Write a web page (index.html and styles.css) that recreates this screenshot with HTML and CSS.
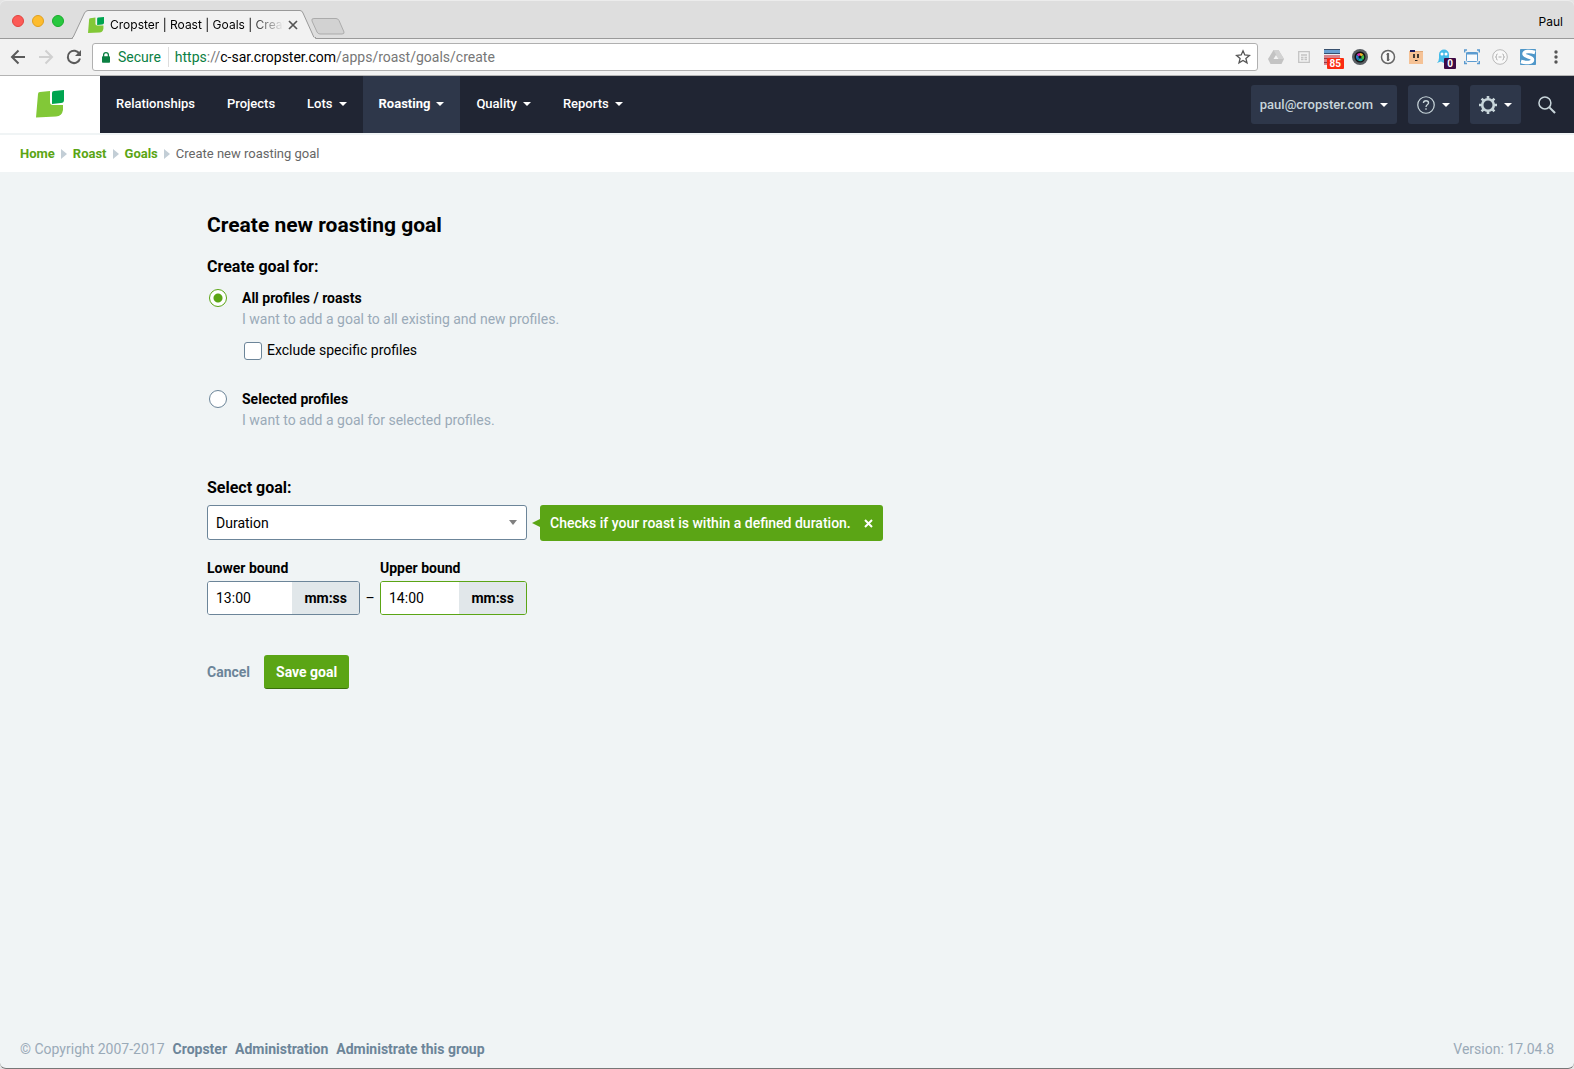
FILE: index.html
```html
<!DOCTYPE html>
<html lang="en">
<head>
    <title>Cropster | Roast | Goals | Create</title>
    <meta charset="UTF-8">
    <meta name="viewport" content="width=device-width, initial-scale=1.0">
    <link rel="stylesheet" href="styles.css">
</head>
<body>
    <div class="window">
        <!-- Browser tabs -->
        <div class="tab-strip">
            <div class="lights">
                <span class="light red"></span>
                <span class="light yellow"></span>
                <span class="light green"></span>
            </div>
            <div class="tab">
                <svg class="tab-shape" width="244" height="30" viewBox="0 0 244 30">
                    <path d="M0 28.500H1L12.500 4Q14 1.500 16 1.500H228Q230 1.500 231 4L242 28.500H244V30H0Z" fill="#f2f2f2" stroke="#9a9a9a"/>
                    <path d="M1 29.500H243" stroke="#f2f2f2" stroke-width="2"/>
                </svg>
                <div class="tab-content">
                    <svg width="16" height="16" viewBox="0 0 28 28">
                        <path d="M2 4Q2 2 4 2L13 1V12Q13 15 16 15H27V20Q26 27 20 27L0 28Z" fill="#82c837"/>
                        <path d="M16 3Q16 1 18 1L28 0V10Q28 13 25 13L16 14Z" fill="#00a550"/>
                    </svg>
                    <span class="tab-title">Cropster | Roast | Goals | Create</span>
                    <button class="tab-close" aria-label="Close tab">
                        <svg width="10" height="10" viewBox="0 0 10 10"><path d="M1 1L9 9M9 1L1 9" stroke="#555" stroke-width="1.700"/></svg>
                    </button>
                </div>
            </div>
            <svg class="new-tab" width="34" height="17" viewBox="0 0 34 17">
                <path d="M3 .5H25Q27 .5 28 2.500L33 14Q33.500 16 31 16H9Q7 16 6 14L1 3Q0 .5 3 .5Z" fill="#d2d2d2" stroke="#ababab"/>
            </svg>
            <span class="profile-name">Paul</span>
        </div>

        <!-- Browser toolbar -->
        <div class="toolbar">
            <div class="tools">
                <button aria-label="Back">
                    <svg width="16" height="16" viewBox="0 0 16 16"><path d="M15 8H2M8.500 1.500L2 8L8.500 14.500" fill="none" stroke="#5a5a5a" stroke-width="2"/></svg>
                </button>
                <button aria-label="Forward">
                    <svg width="16" height="16" viewBox="0 0 16 16"><path d="M1 8H14M7.500 1.500L14 8L7.500 14.500" fill="none" stroke="#d0d0d0" stroke-width="2"/></svg>
                </button>
                <button aria-label="Reload">
                    <svg width="16" height="16" viewBox="0 0 16 16"><path d="M13.500 5A6.200 6.200 0 1 0 14 9.500" fill="none" stroke="#5a5a5a" stroke-width="2"/><path d="M15 1V7H9Z" fill="#5a5a5a"/></svg>
                </button>
            </div>
            <div class="address-bar">
                <svg width="8" height="11" viewBox="0 0 10 13"><rect y="5" width="10" height="8" rx="1" fill="#0b8043"/><path d="M2 6V3.500a3 3 0 0 1 6 0V6" fill="none" stroke="#0b8043" stroke-width="1.600"/></svg>
                <span class="secure">Secure</span>
                <span class="url"><span class="scheme">https</span>://<span class="host">c-sar.cropster.com</span>/apps/roast/goals/create</span>
                <svg class="star" width="16" height="16" viewBox="0 0 16 16"><path d="M8 1.800L9.800 6L14.400 6.400L10.900 9.400L12 13.900L8 11.500L4 13.900L5.100 9.400L1.600 6.400L6.200 6Z" fill="none" stroke="#555" stroke-width="1.300"/></svg>
            </div>
            <div class="extensions">
                <span class="extension">
                    <svg width="16" height="14" viewBox="0 0 16 14"><path d="M5.500 0H10.500L16 9L13.500 14H2.500L0 9Z" fill="#c3c3c3"/><path d="M10.500 0L16 9H10.500L5.500 0Z" fill="#d2d2d2"/><path d="M8 5L10.500 9H5.500Z" fill="#f2f2f2"/></svg>
                </span>
                <span class="extension">
                    <svg width="12" height="12" viewBox="0 0 12 12"><path d="M.7.700H11.300V11.300H.7ZM3 4H9M3 6.500H5.500M6.500 6.500H9M3 8.500H5.500M6.500 8.500H9" fill="none" stroke="#c4c4c4" stroke-width="1.300"/></svg>
                </span>
                <span class="extension">
                    <svg width="16" height="16" viewBox="0 0 16 16"><path d="M0 0H16V16H0Z" fill="#d9828b"/><path d="M0 1H16V4H0Z" fill="#6a9fd0"/><path d="M0 .5H16M0 4.500H16" stroke="#38506e"/><path d="M0 5.500H16" stroke="#e8eef3"/><path d="M0 9.500H16M0 13.500H16" stroke="#8c3f4b"/></svg>
                    <span class="badge badge-red">85</span>
                </span>
                <span class="extension">
                    <svg width="16" height="16" viewBox="0 0 16 16"><circle cx="8" cy="8" r="8" fill="#5a5f64"/><circle cx="8" cy="8" r="5.500" fill="#111"/><path d="M8 8L4.500 6A4 4 0 0 1 8 4Z" fill="#d92fb0"/><path d="M8 8V4A4 4 0 0 1 11.500 6Z" fill="#f0b02c"/><path d="M8 8L11.500 6A4 4 0 0 1 11 11Z" fill="#43bc45"/><path d="M8 8L11 11A4 4 0 0 1 6 11.500Z" fill="#16aa9c"/><path d="M8 8L6 11.500A4 4 0 0 1 4.500 6Z" fill="#2479c6"/><circle cx="8" cy="8" r="1.500" fill="#111"/></svg>
                </span>
                <span class="extension">
                    <svg width="16" height="16" viewBox="0 0 16 16"><circle cx="8" cy="8" r="6.500" fill="#f8f8f8" stroke="#666" stroke-width="1.500"/><path d="M8 4V12" stroke="#666" stroke-width="2.200"/><path d="M6.500 5.500H9M7 10.500H9.500" stroke="#666"/></svg>
                </span>
                <span class="extension">
                    <svg width="16" height="16" viewBox="0 0 16 16"><path d="M1 2H15V15H1Z" fill="#f5c296"/><path d="M2 1H7V3H2Z" fill="#1b1b5e"/><path d="M7 2H15V3H7Z" fill="#e0a878"/><path d="M6 5V9M10 5V9" stroke="#222" stroke-width="1.700"/><path d="M7 11.500H9.500" stroke="#222"/></svg>
                </span>
                <span class="extension">
                    <svg width="16" height="16" viewBox="0 0 16 16"><path d="M3 5.500A5 5 0 0 1 13 5.500V14L10.500 12.500L8 14L5 12.500L1 14Q3 12 3 9Z" fill="#46bce8"/><circle cx="6" cy="5" r="1.500" fill="#fff"/><circle cx="10" cy="5" r="1.500" fill="#fff"/></svg>
                    <span class="badge badge-purple">0</span>
                </span>
                <span class="extension">
                    <svg width="16" height="16" viewBox="0 0 16 16"><path d="M.7 3.500V1H3M13 1H15.300V3.500M15.300 12V14.500H13M3 14.500H.7V12" fill="none" stroke="#5b9bd0" stroke-width="1.400"/><rect x="2.500" y="3.500" width="11" height="9" rx="1" fill="#f8fafc" stroke="#5b9bd0"/><path d="M2 4.500H14" stroke="#5b9bd0" stroke-width="2"/></svg>
                </span>
                <span class="extension">
                    <svg width="16" height="16" viewBox="0 0 16 16"><circle cx="8" cy="8" r="7.300" fill="#f8f8f8" stroke="#b8b8b8"/><path d="M5.500 5Q4.500 5 4.500 6.500T3.500 8Q4.500 8 4.500 9.500T5.500 11M10.500 5Q11.500 5 11.500 6.500T12.500 8Q11.500 8 11.500 9.500T10.500 11M6.500 8H9.500" fill="none" stroke="#aaa"/></svg>
                </span>
                <span class="extension">
                    <svg width="16" height="16" viewBox="0 0 16 16"><path d="M.5.500H15.500V15.500H.5Z" fill="#4f97c9" stroke="#4f97c9"/><path d="M15 3.500C10 2 4 2 4 5C4 8 12.500 7.500 12.500 10.800C12.500 14 6 14 1 12.500" fill="none" stroke="#fff" stroke-width="3.500"/></svg>
                </span>
                <span class="extension">
                    <svg width="4" height="14" viewBox="0 0 4 14"><circle cx="2" cy="2" r="1.700" fill="#555"/><circle cx="2" cy="7" r="1.700" fill="#555"/><circle cx="2" cy="12" r="1.700" fill="#555"/></svg>
                </span>
            </div>
        </div>

        <!-- Main navigation -->
        <header class="navbar">
            <a href="#" class="logo" aria-label="Cropster">
                <svg width="28" height="28" viewBox="0 0 28 28">
                    <path d="M2 4Q2 2 4 2L14 1V12Q14 15 17 15H27V20Q26 26 20 26.500L0 27.500Z" fill="#82c837"/>
                    <path d="M16 3Q16 1 18 1L28 0V10Q28 13 25 13L16 14Z" fill="#00a550"/>
                </svg>
            </a>
            <nav class="nav-links">
                <a href="#">Relationships</a>
                <a href="#">Projects</a>
                <a href="#">Lots <span class="caret"></span></a>
                <a href="#" class="active">Roasting <span class="caret"></span></a>
                <a href="#">Quality <span class="caret"></span></a>
                <a href="#">Reports <span class="caret"></span></a>
            </nav>
            <div class="nav-tools">
                <button class="nav-button">paul@cropster.com <span class="caret"></span></button>
                <button class="nav-button" aria-label="Help">
                    <svg width="18" height="18" viewBox="0 0 19 19" fill="none" stroke="#c8d5da"><circle cx="9.500" cy="9.500" r="8.700" stroke-width="1.300"/><path d="M6.800 7.500Q6.800 5 9.500 5T12.200 7.300C12.200 9 9.500 9 9.500 11.500M9.500 13V14.600" stroke-width="1.400"/></svg>
                    <span class="caret"></span>
                </button>
                <button class="nav-button" aria-label="Settings">
                    <svg width="18" height="18" viewBox="0 0 18 18" fill="none" stroke="#c8d5da"><circle cx="9" cy="9" r="5.800" stroke-width="2.600"/><path d="M9 0V3M9 15V18M0 9H3M15 9H18M2.600 2.600L4.800 4.800M13.200 13.200L15.400 15.400M2.600 15.400L4.800 13.200M13.200 4.800L15.400 2.600" stroke-width="2.600"/></svg>
                    <span class="caret"></span>
                </button>
                <button class="search-button" aria-label="Search">
                    <svg width="18" height="18" viewBox="0 0 19 19" fill="none" stroke="#c8d5da"><circle cx="7.300" cy="7.300" r="6.300" stroke-width="1.600"/><path d="M12 12L18 18" stroke-width="2.200"/></svg>
                </button>
            </div>
        </header>

        <div class="breadcrumb">
            <a href="#">Home</a><span class="separator"></span>
            <a href="#">Roast</a><span class="separator"></span>
            <a href="#">Goals</a><span class="separator"></span>
            <span>Create new roasting goal</span>
        </div>

        <!-- Goal form -->
        <main class="content">
            <h1>Create new roasting goal</h1>
            <form onsubmit="return false;" autocomplete="off">
                <h2>Create goal for:</h2>
                <div class="option">
                    <input type="radio" id="all-profiles" name="goal-for" checked>
                    <div>
                        <label for="all-profiles">All profiles / roasts</label>
                        <p>I want to add a goal to all existing and new profiles.</p>
                        <div class="exclude">
                            <input type="checkbox" id="exclude">
                            <label for="exclude">Exclude specific profiles</label>
                        </div>
                    </div>
                </div>
                <div class="option">
                    <input type="radio" id="selected-profiles" name="goal-for">
                    <div>
                        <label for="selected-profiles">Selected profiles</label>
                        <p>I want to add a goal for selected profiles.</p>
                    </div>
                </div>

                <h2 class="select-title"><label for="goal">Select goal:</label></h2>
                <div class="goal-row">
                    <div class="select-wrap">
                        <select id="goal">
                            <option>Duration</option>
                        </select>
                        <span class="select-arrow"></span>
                    </div>
                    <div class="hint">
                        <span>Checks if your roast is within a defined duration.</span>
                        <button type="button" aria-label="Close hint">
                            <svg width="9" height="9" viewBox="0 0 9 9"><path d="M1 1L8 8M8 1L1 8" stroke="#fff" stroke-width="2"/></svg>
                        </button>
                    </div>
                </div>

                <div class="bounds">
                    <div class="bound lower">
                        <label for="lower">Lower bound</label>
                        <div class="input-group">
                            <input type="text" id="lower" value="13:00">
                            <span class="unit">mm:ss</span>
                        </div>
                    </div>
                    <span class="dash">–</span>
                    <div class="bound upper">
                        <label for="upper">Upper bound</label>
                        <div class="input-group focused">
                            <input type="text" id="upper" value="14:00">
                            <span class="unit">mm:ss</span>
                        </div>
                    </div>
                </div>

                <div class="actions">
                    <a href="#">Cancel</a>
                    <button type="submit" class="save-button">Save goal</button>
                </div>
            </form>
        </main>

        <footer class="footer">
            <span>© Copyright 2007-2017</span>
            <a href="#">Cropster</a>
            <a href="#">Administration</a>
            <a href="#">Administrate this group</a>
            <span class="version">Version: 17.04.8</span>
        </footer>
    </div>
</body>
</html>
```
FILE: styles.css
```css
*, *:before, *:after {
    box-sizing: border-box;
}

body {
    margin: 0;
    font-family: Roboto, Arial, sans-serif;
    font-size: 14px;
    line-height: 20px;
    color: #000;
    background-color: #e4e4e4;
}

button {
    font: inherit;
    padding: 0;
    border: none;
    background: none;
    cursor: pointer;
}

a {
    text-decoration: none;
}

svg {
    display: block;
    flex-shrink: 0;
}

.window {
    display: flex;
    flex-direction: column;
    min-height: 100vh;
    border-top: 1px solid #ececec;
    border-bottom: 1px solid #777;
    border-radius: 6px;
    background-color: #f0f4f5;
    overflow: hidden;
}

/* Browser chrome */
.tab-strip {
    display: flex;
    align-items: flex-end;
    height: 38px;
    padding-right: 11px;
    background-color: #dedede;
    box-shadow: inset 0 -1px #9a9a9a;
    font-family: Inter, Roboto, sans-serif;
    font-size: 12px;
}

.lights {
    display: flex;
    gap: 8px;
    width: 72px;
    padding: 0 0 12px 12px;
}

.light {
    width: 12px;
    height: 12px;
    border-radius: 50%;
}

.red {
    background-color: #fc5b57;
    border: 1px solid #e2443f;
}

.yellow {
    background-color: #fdbc2e;
    border: 1px solid #e0a01f;
}

.green {
    background-color: #28c83f;
    border: 1px solid #1aac2c;
}

.tab {
    display: grid;
}

.tab-shape, .tab-content {
    grid-area: 1 / 1;
}

.tab-content {
    display: flex;
    align-items: center;
    padding: 2px 18px 0 16px;
}

.tab-title {
    flex: 1;
    width: 0;
    margin-left: 6px;
    overflow: hidden;
    white-space: nowrap;
    -webkit-mask-image: linear-gradient(to right, #000 80%, transparent);
    mask-image: linear-gradient(to right, #000 80%, transparent);
}

.tab-close {
    margin-left: 4px;
}

.new-tab {
    margin: 0 0 4px -5px;
}

.profile-name {
    margin: 0 0 7px auto;
}

.toolbar {
    display: flex;
    align-items: center;
    height: 37px;
    padding: 0 4px 0 10px;
    border-bottom: 1px solid #b4b4b4;
    background-color: #f2f2f2;
}

.tools {
    display: flex;
    gap: 12px;
    margin-right: 10px;
}

.address-bar {
    display: flex;
    flex: 1;
    align-items: center;
    height: 28px;
    margin-right: 4px;
    padding: 0 6px 0 9px;
    border: 1px solid #b0b0b0;
    border-radius: 3px;
    background-color: #fff;
}

.secure {
    margin-left: 8px;
    padding-right: 7px;
    border-right: 1px solid #ddd;
    color: #0b8043;
}

.url {
    margin-left: 6px;
    color: #777;
}

.scheme {
    color: #0b8043;
}

.host {
    color: #000;
}

.star {
    margin-left: auto;
}

.extensions {
    display: flex;
}

.extension {
    display: flex;
    position: relative;
    align-items: center;
    justify-content: center;
    width: 28px;
    height: 28px;
}

.badge {
    position: absolute;
    right: 2px;
    bottom: 2px;
    padding: 0 3px;
    border-radius: 1px;
    color: #fff;
    font-size: 10px;
    font-weight: bold;
    line-height: 11px;
}

.badge-red {
    background-color: #fb2b11;
}

.badge-purple {
    background-color: #3c0a45;
}

/* Navigation */
.navbar {
    display: flex;
    height: 57px;
    background-color: #202533;
}

.logo {
    display: flex;
    align-items: center;
    justify-content: center;
    width: 100px;
    padding-bottom: 2px;
    background-color: #fff;
}

.nav-links {
    display: flex;
    font-size: 13px;
    font-weight: 500;
}

.nav-links a {
    display: flex;
    align-items: center;
    padding: 0 16px 2px;
    color: #fff;
}

.nav-links .active {
    background-color: #2e374a;
    font-weight: bold;
}

.caret {
    margin-left: 6px;
    border: 4px solid transparent;
    border-top-color: #fff;
    border-bottom: none;
}

.nav-tools {
    display: flex;
    align-items: center;
    gap: 11px;
    margin-left: auto;
    padding-right: 18px;
}

.nav-button {
    display: flex;
    align-items: center;
    height: 39px;
    padding: 0 9px;
    border-radius: 3px;
    background-color: #2e374a;
    color: #c8d5da;
    font-size: 13px;
    font-weight: 500;
}

.nav-button .caret {
    margin-left: 7px;
}

.search-button {
    margin-left: 6px;
}

.breadcrumb {
    display: flex;
    align-items: center;
    height: 39px;
    padding: 0 20px;
    border-top: 2px solid #f0f4f5;
    background-color: #fff;
    color: #666;
    font-size: 13px;
}

.breadcrumb a {
    color: #5ba515;
    font-weight: bold;
}

.separator {
    margin: 0 6px;
    border: 5px solid transparent;
    border-left: 6px solid #c3ced6;
    border-right: none;
}

/* Form */
.content {
    flex: 1;
    padding: 40px 20px 40px 207px;
}

h1, h2, p {
    margin: 0;
}

h1 {
    margin-bottom: 17px;
    font-size: 21px;
    font-weight: bold;
    line-height: 26px;
}

h2 {
    margin-bottom: 9px;
    font-size: 16px;
    font-weight: bold;
    line-height: 24px;
}

.option {
    display: flex;
    gap: 15px;
    margin-bottom: 29px;
    padding-left: 2px;
}

.option label {
    display: block;
    font-weight: bold;
}

.option p {
    color: #9aaab8;
    line-height: 22px;
}

.option input {
    flex-shrink: 0;
    appearance: none;
    width: 18px;
    height: 18px;
    margin: 1px 0 0;
    border: 1px solid #6c8599;
    background-color: #fff;
}

.option input[type="radio"] {
    border-radius: 50%;
}

.option input[type="radio"]:checked {
    border-color: #5ba515;
    background-image: radial-gradient(circle, #5ba515 4px, transparent 5px);
}

.exclude {
    display: flex;
    gap: 5px;
    margin-top: 10px;
    padding-left: 2px;
}

.option .exclude input {
    margin-top: 2px;
    border-radius: 3px;
}

.option .exclude label {
    font-weight: normal;
}

.select-title {
    margin-top: 45px;
    margin-bottom: 5px;
}

.goal-row {
    display: flex;
    align-items: flex-start;
    gap: 13px;
}

.select-wrap {
    position: relative;
    width: 320px;
}

select {
    display: block;
    appearance: none;
    width: 100%;
    height: 35px;
    padding: 0 8px;
    border: 1px solid #6c8599;
    border-radius: 3px;
    background-color: #fff;
    color: #000;
    font: inherit;
}

.select-arrow {
    position: absolute;
    top: 15px;
    right: 10px;
    border: 4px solid transparent;
    border-top: 5px solid #808080;
    border-bottom: none;
    pointer-events: none;
}

.hint {
    display: flex;
    position: relative;
    align-items: center;
    height: 36px;
    padding: 0 10px;
    border-radius: 3px;
    background-color: #5ba515;
    color: #fff;
    font-weight: 500;
}

.hint:before {
    content: "";
    position: absolute;
    left: -8px;
    border: 4px solid transparent;
    border-right: 8px solid #5ba515;
    border-left: none;
}

.hint button {
    margin-left: 13px;
}

.bounds {
    display: flex;
    align-items: flex-end;
    width: 320px;
    margin-top: 17px;
}

.bound label {
    display: block;
    margin-bottom: 3px;
    font-weight: bold;
}

.lower {
    width: 153px;
}

.upper {
    width: 147px;
}

.dash {
    width: 20px;
    line-height: 34px;
    text-align: center;
}

.input-group {
    display: flex;
    height: 34px;
    border: 1px solid #6c8599;
    border-radius: 3px;
    background-color: #fff;
    overflow: hidden;
}

.focused {
    border-color: #5ba515;
}

.input-group input {
    flex: 1;
    min-width: 0;
    padding: 0 8px;
    border: none;
    outline: none;
    font: inherit;
}

.unit {
    padding: 0 12px;
    background-color: #e1e7ea;
    font-weight: bold;
    line-height: 32px;
}

.actions {
    display: flex;
    align-items: center;
    gap: 14px;
    margin-top: 40px;
    font-weight: bold;
}

.actions a {
    color: #6c8599;
}

.save-button {
    height: 34px;
    padding: 0 12px;
    border-bottom: 1px solid #39700a;
    border-radius: 3px;
    background-color: #5ba515;
    color: #fff;
}

.footer {
    display: flex;
    gap: 8px;
    padding: 0 20px 9px;
    color: #9aaab8;
}

.footer a {
    color: #6c8599;
    font-weight: bold;
}

.version {
    margin-left: auto;
}
```
